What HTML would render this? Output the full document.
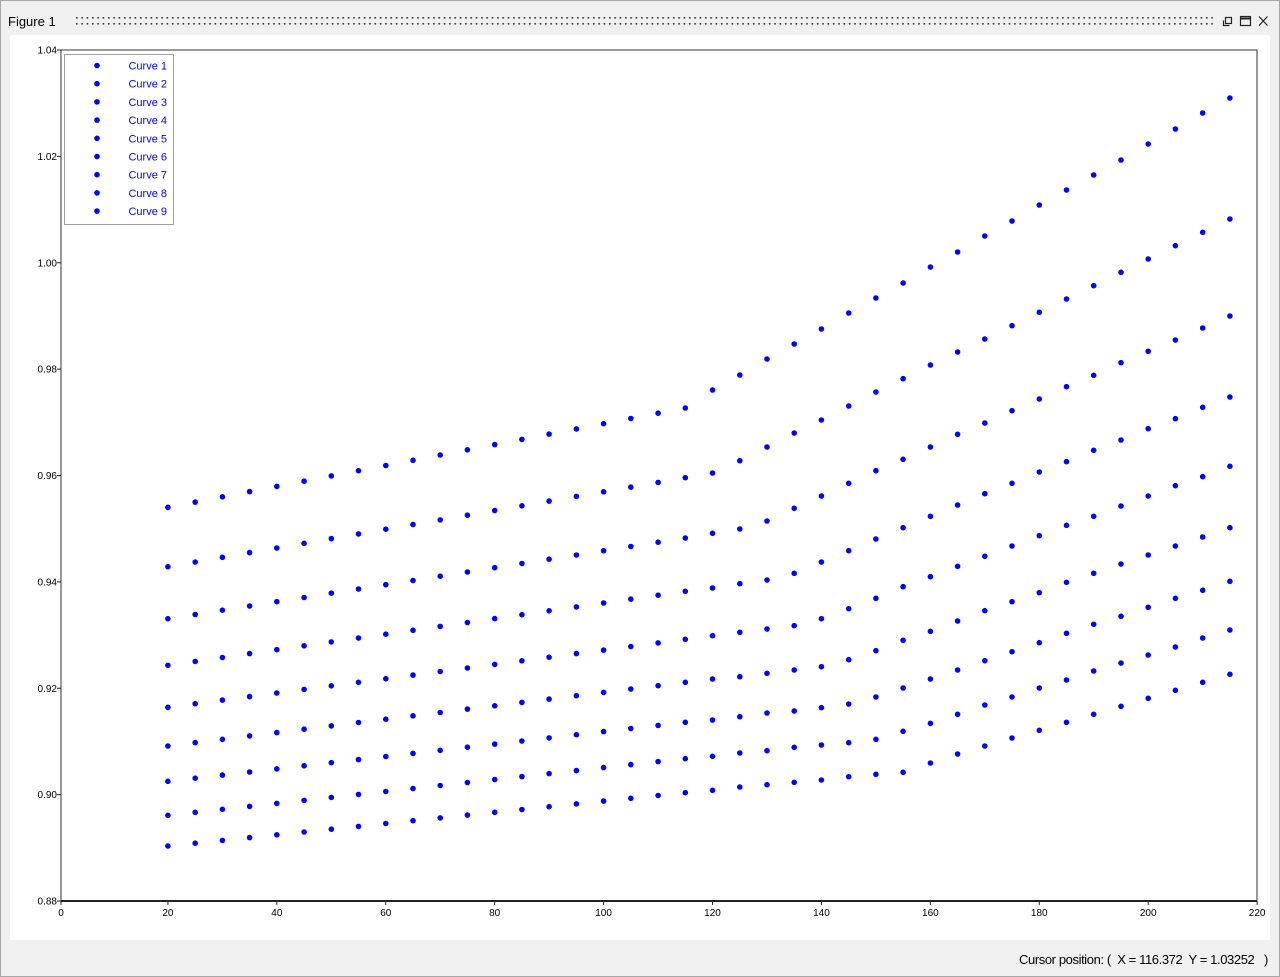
<!DOCTYPE html>
<html><head><meta charset="utf-8"><style>
html,body{margin:0;padding:0;width:1280px;height:977px;overflow:hidden;background:#f0f0f0;font-family:"Liberation Sans",Arial,sans-serif}
#win{position:absolute;left:0;top:0;width:1278px;height:975px;border:1px solid #a8a8a8;background:#f0f0f0}
#title{position:absolute;left:8px;top:14px;font-size:13px;color:#000}
#panel{position:absolute;left:10px;top:35px;width:1260px;height:905px;background:#fff}
#status{position:absolute;left:1019px;top:952px;font-size:13px;color:#000;letter-spacing:-0.4px;white-space:nowrap}
svg{position:absolute;left:0;top:0}
</style></head><body>
<div id="win"></div>
<div id="title">Figure 1</div>
<svg width="1280" height="40" style="left:0;top:0">
<defs><pattern id="gp" x="76" y="17" width="5.33" height="6" patternUnits="userSpaceOnUse"><rect x="0" y="0" width="1.6" height="1.6" fill="#333"/></pattern></defs>
<rect x="76" y="17" width="1137" height="9" fill="url(#gp)"/>
<g fill="none" stroke="#222" stroke-width="1.2">
<rect x="1225.5" y="17.5" width="6" height="6"/><path d="M1223.5 20.5v5h6"/>
<rect x="1240.5" y="16.5" width="10" height="9"/><path d="M1240.5 18.5h10" stroke-width="2"/>
<path d="M1259 16.5l8.5 9M1267.5 16.5l-8.5 9"/>
</g></svg>
<div id="panel"></div>
<svg id="plot" width="1280" height="977" font-family="Liberation Sans, Arial, sans-serif"></svg>
<div id="status">Cursor position: (&nbsp; X = 116.372&nbsp; Y = 1.03252&nbsp;&nbsp; )</div>
<script>
var s='';
var L=61,T=50,R=1257,B=901;
s+='<rect x="'+L+'" y="'+T+'" width="'+(R-L)+'" height="'+(B-T)+'" fill="#fff" stroke="#333" stroke-width="1"/>';
s+='<line x1="'+L+'" y1="'+B+'" x2="'+R+'" y2="'+B+'" stroke="#222" stroke-width="2"/>';
var yl=['1.04','1.02','1.00','0.98','0.96','0.94','0.92','0.90','0.88'];
for(var k=0;k<9;k++){var y=T+k*106.375;
s+='<line x1="'+(L-4)+'" y1="'+y+'" x2="'+L+'" y2="'+y+'" stroke="#222"/>';
s+='<text x="'+(L-4)+'" y="'+(y+3.5)+'" font-size="10" text-anchor="end" fill="#000">'+yl[k]+'</text>';}
for(var k=0;k<=11;k++){var x=59+k*20*5.446;if(k==0)x=61;
s+='<line x1="'+x+'" y1="'+B+'" x2="'+x+'" y2="'+(B+4)+'" stroke="#222"/>';
s+='<text x="'+x+'" y="'+(B+15)+'" font-size="10" text-anchor="middle" fill="#000">'+(k*20)+'</text>';}
function zy(a){return a.map(function(z){return 330+z/3;});}
var start=[507.3,566.7,618.7,665.3,707.3,746,781.3,815.3,846];
var tail=[
[408,390,375,359,344,329,313,298,283,267,252,236,221,205,190,175,160,144,129,113,98],
[477.7,473,460.7,447,433,420,406,392,378.7,365,352,339,325.7,312.3,299,285.7,272.3,259,245.7,232.3,219],
zy([624,610,597,573,535,498,460,422,388,351,313,279,242,207,170,136,98,64,30,-6,-42]),
zy([784,774,761,750,730,696,662,627,593,559,525,491,460,426,395,361,330,296,266,232,201]),
zy([928,917,907,897,887,866,836,805,770,740,709,679,648,617,586,559,528,498,467,440,409]),
zy([1057,1047,1040,1030,1020,1010,989,962,931,904,873,842,815,788,757,730,702,675,648,621,593]),
zy([1177,1170,1160,1149,1143,1133,1122,1101,1074,1047,1020,992,965,938,910,883,859,832,805,781,754]),
zy([1286,1279,1269,1262,1252,1245,1238,1228,1204,1180,1153,1125,1101,1074,1050,1023,999,975,951,924,900]),
zy([1388,1381,1371,1364,1357,1350,1340,1333,1327,1299,1272,1248,1224,1201,1177,1153,1129,1105,1081,1057,1033])];
for(var c=0;c<9;c++){
 for(var i=0;i<40;i++){var xv=20+i*5,y;
  if(xv<115){y=start[c]+(tail[c][0]-start[c])*(xv-20)/95;} else y=tail[c][(xv-115)/5];
  s+='<circle cx="'+(59+xv*5.446).toFixed(1)+'" cy="'+y.toFixed(1)+'" r="2.8" fill="#0000ff"/>';}
}
s+='<rect x="64.5" y="54.5" width="109" height="170" fill="#fff" stroke="#a0a0a0"/>';
for(var c=0;c<9;c++){var y=65.5+c*18.2;
s+='<circle cx="97" cy="'+y+'" r="2.8" fill="#0000ff"/>';
s+='<text x="167" y="'+(y+4)+'" font-size="11" text-anchor="end" fill="#0000ff">Curve '+(c+1)+'</text>';}
document.getElementById('plot').innerHTML=s;
</script>
</body></html>
